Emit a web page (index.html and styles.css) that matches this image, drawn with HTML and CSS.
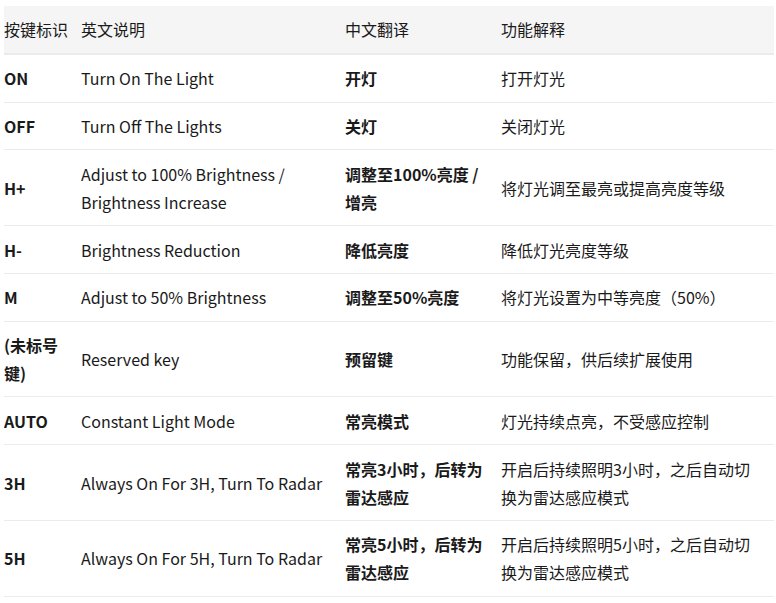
FILE: index.html
```html
<!DOCTYPE html>
<html lang="zh">
<head>
<meta charset="utf-8">
<title>按键说明</title>
<link rel="stylesheet" href="styles.css">
</head>
<body>
<table class="keys">
  <colgroup>
    <col class="c1"><col class="c2"><col class="c3"><col class="c4">
  </colgroup>
  <thead>
    <tr><th>按键标识</th><th>英文说明</th><th>中文翻译</th><th>功能解释</th></tr>
  </thead>
  <tbody>
    <tr><td class="b">ON</td><td>Turn On The Light</td><td class="b">开灯</td><td>打开灯光</td></tr>
    <tr><td class="b">OFF</td><td>Turn Off The Lights</td><td class="b">关灯</td><td>关闭灯光</td></tr>
    <tr><td class="b">H+</td><td>Adjust to 100% Brightness / Brightness Increase</td><td class="b">调整至100%亮度 / 增亮</td><td>将灯光调至最亮或提高亮度等级</td></tr>
    <tr><td class="b">H-</td><td>Brightness Reduction</td><td class="b">降低亮度</td><td>降低灯光亮度等级</td></tr>
    <tr><td class="b">M</td><td>Adjust to 50% Brightness</td><td class="b">调整至50%亮度</td><td>将灯光设置为中等亮度（50%）</td></tr>
    <tr><td class="b">(未标号键)</td><td>Reserved key</td><td class="b">预留键</td><td>功能保留，供后续扩展使用</td></tr>
    <tr><td class="b">AUTO</td><td>Constant Light Mode</td><td class="b">常亮模式</td><td>灯光持续点亮，不受感应控制</td></tr>
    <tr><td class="b">3H</td><td>Always On For 3H, Turn To Radar</td><td class="b">常亮3小时，后转为雷达感应</td><td>开启后持续照明3小时，之后自动切换为雷达感应模式</td></tr>
    <tr><td class="b">5H</td><td>Always On For 5H, Turn To Radar</td><td class="b">常亮5小时，后转为雷达感应</td><td>开启后持续照明5小时，之后自动切换为雷达感应模式</td></tr>
  </tbody>
</table>
</body>
</html>
```
FILE: styles.css
```css
html, body {
  background: #ffffff;
}
body {
  margin: 6px 2px 0 4px;
  font-family: "Noto Sans CJK SC", "Noto Sans", sans-serif;
  font-size: 16px;
  line-height: 28px;
  color: #1a1a1a;
}
.keys {
  width: 770px;
  table-layout: fixed;
  border-collapse: collapse;
}
.c1 { width: 77px; }
.c2 { width: 264px; }
.c3 { width: 156px; }
.c4 { width: 273px; }
.keys th,
.keys td {
  padding: 9.4px 12px 9.4px 0;
  text-align: left;
  vertical-align: middle;
}
.keys th {
  font-weight: normal;
  background: #f5f5f5;
  border-bottom: 2px solid #ebebeb;
}
.keys td {
  border-bottom: 1px solid #ececec;
}
.keys td.b {
  font-weight: bold;
}
```
